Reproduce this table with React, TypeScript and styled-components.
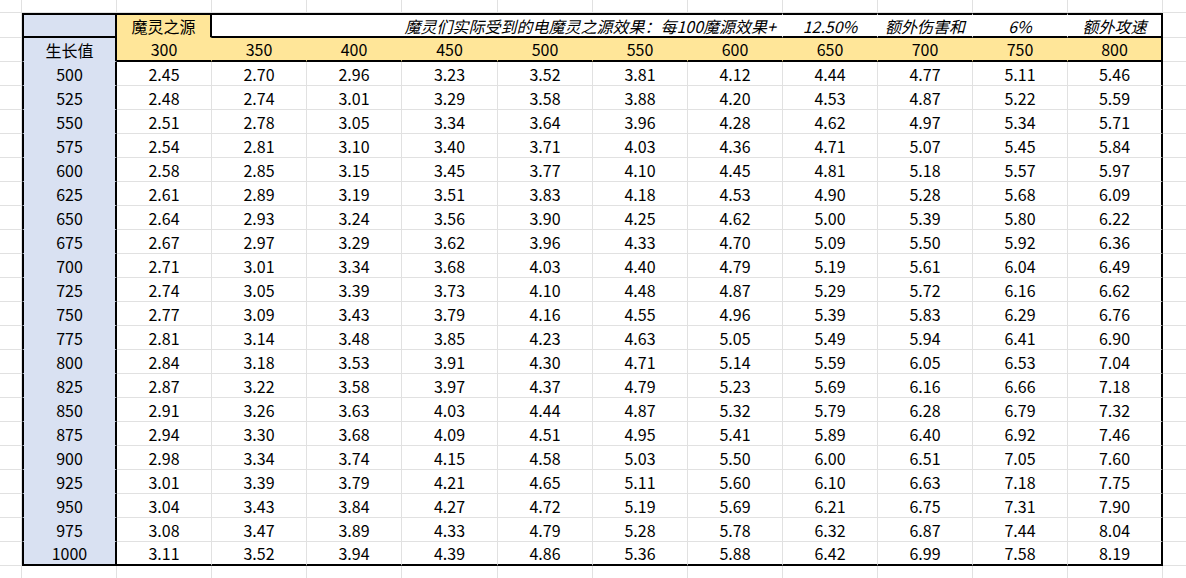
import styled, { createGlobalStyle, css } from 'styled-components'

const GRID = '#e1e1e1'
const BLUE = '#d9e1f2'
const YELLOW = '#ffe699'
const INK = '#000'

const levels = [300, 350, 400, 450, 500, 550, 600, 650, 700, 750, 800]

const rows: [number, string][] = [
  [500, '2.45 2.70 2.96 3.23 3.52 3.81 4.12 4.44 4.77 5.11 5.46'],
  [525, '2.48 2.74 3.01 3.29 3.58 3.88 4.20 4.53 4.87 5.22 5.59'],
  [550, '2.51 2.78 3.05 3.34 3.64 3.96 4.28 4.62 4.97 5.34 5.71'],
  [575, '2.54 2.81 3.10 3.40 3.71 4.03 4.36 4.71 5.07 5.45 5.84'],
  [600, '2.58 2.85 3.15 3.45 3.77 4.10 4.45 4.81 5.18 5.57 5.97'],
  [625, '2.61 2.89 3.19 3.51 3.83 4.18 4.53 4.90 5.28 5.68 6.09'],
  [650, '2.64 2.93 3.24 3.56 3.90 4.25 4.62 5.00 5.39 5.80 6.22'],
  [675, '2.67 2.97 3.29 3.62 3.96 4.33 4.70 5.09 5.50 5.92 6.36'],
  [700, '2.71 3.01 3.34 3.68 4.03 4.40 4.79 5.19 5.61 6.04 6.49'],
  [725, '2.74 3.05 3.39 3.73 4.10 4.48 4.87 5.29 5.72 6.16 6.62'],
  [750, '2.77 3.09 3.43 3.79 4.16 4.55 4.96 5.39 5.83 6.29 6.76'],
  [775, '2.81 3.14 3.48 3.85 4.23 4.63 5.05 5.49 5.94 6.41 6.90'],
  [800, '2.84 3.18 3.53 3.91 4.30 4.71 5.14 5.59 6.05 6.53 7.04'],
  [825, '2.87 3.22 3.58 3.97 4.37 4.79 5.23 5.69 6.16 6.66 7.18'],
  [850, '2.91 3.26 3.63 4.03 4.44 4.87 5.32 5.79 6.28 6.79 7.32'],
  [875, '2.94 3.30 3.68 4.09 4.51 4.95 5.41 5.89 6.40 6.92 7.46'],
  [900, '2.98 3.34 3.74 4.15 4.58 5.03 5.50 6.00 6.51 7.05 7.60'],
  [925, '3.01 3.39 3.79 4.21 4.65 5.11 5.60 6.10 6.63 7.18 7.75'],
  [950, '3.04 3.43 3.84 4.27 4.72 5.19 5.69 6.21 6.75 7.31 7.90'],
  [975, '3.08 3.47 3.89 4.33 4.79 5.28 5.78 6.32 6.87 7.44 8.04'],
  [1000, '3.11 3.52 3.94 4.39 4.86 5.36 5.88 6.42 6.99 7.58 8.19'],
]

const GlobalStyle = createGlobalStyle`
  html, body {
    margin: 0;
    padding: 0;
    background: #fff;
    overflow: hidden;
  }
`

export default function App() {
  const last = rows.length - 1
  return (
    <>
      <GlobalStyle />
      <Sheet>
        {/* partial row above the table */}
        {Array.from({ length: 14 }, (_, i) => (
          <Pad key={'top' + i} $noRight={i === 13} />
        ))}

        {/* row 1: title row */}
        <Pad />
        <Cell $fill={BLUE} $t $l $r $b />
        <Cell $fill={YELLOW} $t $r>魔灵之源</Cell>
        <Cell $fill="#fff" $t $b $span={6} $end $italic>
          魔灵们实际受到的电魔灵之源效果：每100魔源效果+
        </Cell>
        <Cell $fill="#fff" $t $b $italic>12.50%</Cell>
        <Cell $fill="#fff" $t $b $italic>额外伤害和</Cell>
        <Cell $fill="#fff" $t $b $italic>6%</Cell>
        <Cell $fill="#fff" $t $b $r $italic>额外攻速</Cell>
        <Pad $noRight />

        {/* row 2: levels */}
        <Pad />
        <Cell $fill={BLUE} $l $r>生长值</Cell>
        {levels.map((lv, i) => (
          <Cell key={lv} $fill={YELLOW} $b $r={i === levels.length - 1}>
            {lv}
          </Cell>
        ))}
        <Pad $noRight />

        {/* data rows */}
        {rows.map(([growth, line], r) => (
          <Row key={growth}>
            <Pad />
            <Cell $fill={BLUE} $l $r $b={r === last}>{growth}</Cell>
            {line.split(' ').map((v, c) => (
              <Cell key={c} $r={c === 10} $b={r === last}>{v}</Cell>
            ))}
            <Pad $noRight />
          </Row>
        ))}

        {/* partial row below the table */}
        {Array.from({ length: 14 }, (_, i) => (
          <Pad key={'bot' + i} $noRight={i === 13} $noBottom />
        ))}
      </Sheet>
    </>
  )
}

const Sheet = styled.div`
  width: 1186px;
  height: 578px;
  display: grid;
  grid-template-columns: 22px repeat(4, 95px) 96px repeat(7, 95px) 1fr;
  grid-template-rows: 13px 25px repeat(22, 24px) 1fr;
  font-family: "Noto Sans CJK SC", "Noto Sans", sans-serif;
  font-size: 16px;
  line-height: 1;
  color: ${INK};
  background: #fff;
`

const Row = styled.div`
  display: contents;
`

const Pad = styled.div<{ $noRight?: boolean; $noBottom?: boolean }>`
  box-sizing: border-box;
  border-right: ${p => (p.$noRight ? 'none' : `1px solid ${GRID}`)};
  border-bottom: ${p => (p.$noBottom ? 'none' : `1px solid ${GRID}`)};
`

const Cell = styled.div<{
  $fill?: string
  $t?: boolean
  $r?: boolean
  $b?: boolean
  $l?: boolean
  $span?: number
  $end?: boolean
  $italic?: boolean
}>`
  box-sizing: border-box;
  grid-column: span ${p => p.$span ?? 1};
  display: flex;
  align-items: center;
  justify-content: ${p => (p.$end ? 'flex-end' : 'center')};
  padding-right: ${p => (p.$end ? '6px' : '0')};
  background: ${p => p.$fill ?? 'transparent'};
  border-right: 1px solid ${p => p.$fill ?? GRID};
  border-bottom: 1px solid ${p => p.$fill ?? GRID};
  font-style: ${p => (p.$italic ? 'italic' : 'normal')};
  white-space: nowrap;
  ${p => p.$t && css`border-top: 2px solid ${INK};`}
  ${p => p.$l && css`border-left: 2px solid ${INK};`}
  ${p => p.$r && css`border-right: 2px solid ${INK};`}
  ${p => p.$b && css`border-bottom: 2px solid ${INK};`}
`
